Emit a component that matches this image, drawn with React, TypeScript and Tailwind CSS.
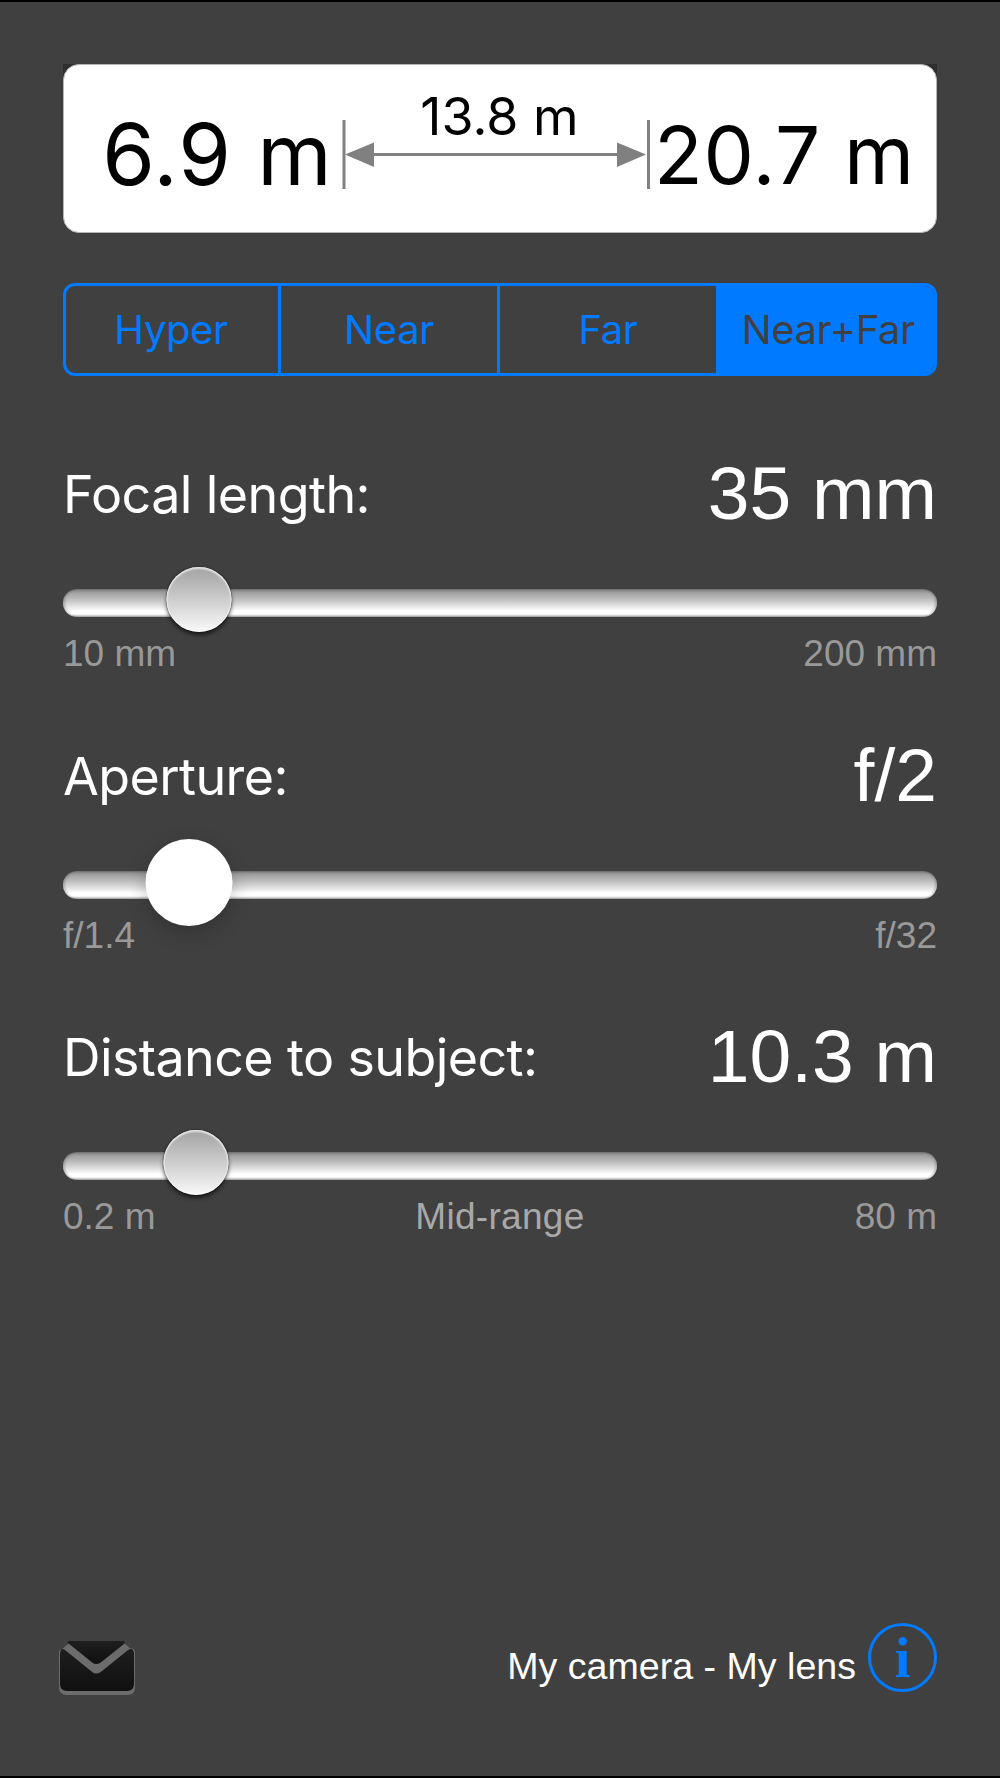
import React from 'react';
import clsx from 'clsx';

const modes = [
    { label: 'Hyper', width: 'w-[212px]' },
    { label: 'Near', width: 'w-[219px]' },
    { label: 'Far', width: 'w-[219px]' },
    { label: 'Near+Far', width: 'w-[218px]' },
];

interface SliderRowProps {
    label: string;
    value: string;
    min: string;
    max: string;
    note?: string;
    position: number;
    active?: boolean;
}

const ResultPanel: React.FC = () => (
    <div className="h-[169px] bg-[linear-gradient(#2f2f2f_16px,transparent_16px)]">
        <div className="flex h-full rounded-[16px] border border-[#b4b4b4] bg-white text-black">
            <div className="w-[278px] pt-[40px] pr-[9px] text-right text-[85px] leading-[100px] tracking-[1.2px] whitespace-nowrap">6.9 m</div>
            <div className="w-[309px]">
                <div className="pt-[20px] pl-[6px] text-center text-[52px] leading-[64px] whitespace-nowrap">13.8 m</div>
                <svg className="-mt-[29px] block" width="309" height="70" viewBox="0 0 309 70" fill="#808080">
                    <rect x="0.5" y="0" width="3" height="69" />
                    <rect x="305" y="0" width="3" height="69" />
                    <rect x="20" y="33" width="270" height="3" />
                    <path d="M3 34.500 32 22.500v24.500z" />
                    <path d="M304 34.500 275 22.500v24.500z" />
                </svg>
            </div>
            <div className="pt-[40px] pl-[3px] text-[80px] leading-[100px] tracking-[0.6px] whitespace-nowrap">20.7 m</div>
        </div>
    </div>
);

const ModePicker: React.FC<{ selected: string }> = ({ selected }) => (
    <div className="mt-[50px] flex h-[93px] overflow-hidden rounded-[12px] border-3 border-[#007aff] bg-[#404040]">
        {modes.map((mode, i) => (
            <button
                key={mode.label}
                className={clsx(
                    'shrink-0 text-center text-[40px] leading-[88px] tracking-[-0.4px] whitespace-nowrap',
                    mode.width,
                    i > 0 ? 'border-l-3 border-[#007aff]' : 'pr-[2px]',
                    mode.label === selected ? 'bg-[#007aff] pl-[3px] text-[#404040]' : 'text-[#007aff]'
                )}
            >
                {mode.label}
            </button>
        ))}
    </div>
);

const SliderRow: React.FC<SliderRowProps> = ({ label, value, min, max, note, position, active }) => (
    <section className="h-[281.5px]">
        <div className="flex h-[139px] items-start justify-between">
            <div className="pt-[15px] text-[52px] leading-[60px] tracking-[-0.6px]">{label}</div>
            <div className="pt-[3px] font-['Liberation_Sans',sans-serif] text-[75px] leading-[80px]">{value}</div>
        </div>
        <div className="relative h-[28px] rounded-[14px] bg-[linear-gradient(#7d7d7d_0px,#a2a2a2_4px,#b8b8b8_9px,#dcdcdc_16px,#fff_22px,#fff_25px,#b0b0b0_28px)] shadow-[inset_2px_0_2px_#00000030,inset_-2px_0_2px_#00000030]">
            <div
                className={clsx(
                    'absolute -translate-x-1/2 rounded-full',
                    active
                        ? '-top-[32px] size-[87px] bg-white shadow-[0_6px_20px_#00000038]'
                        : '-top-[22px] size-[65px] bg-linear-to-b from-[#a2a2a2] to-[#fafafa] shadow-[0_3px_4px_#000000a0,0_0_1px_1px_#00000030,inset_0_2px_2px_#ffffffa0,inset_0_0_1px_1px_#ffffff60]'
                )}
                style={{ left: position }}
            />
        </div>
        <div className="grid grid-cols-3 pt-[17px] font-['Liberation_Sans',sans-serif] text-[37px] leading-[40px] text-[#999]">
            <span>{min}</span>
            <span className="text-center tracking-[0.3px] text-[#a8a8a8]">{note}</span>
            <span className="text-right">{max}</span>
        </div>
    </section>
);

const MailIcon: React.FC = () => (
    <svg className="mt-[18px] -ml-[4px] block" width="80" height="60" viewBox="0 0 80 60">
        <defs>
            <linearGradient id="mail" x1="0" y1="0" x2="0" y2="1">
                <stop offset="0" stopColor="#1e1e1e" />
                <stop offset="1" stopColor="#101010" />
            </linearGradient>
        </defs>
        <path d="M0 10Q2 7 6 9L32 29Q37 34 43 29L70 8Q75 6 76 11V46Q76 54 68 54H8Q0 54 0 46Z" fill="#6c6c6c" />
        <path d="M9 3H66L72 8L43 32Q37 37 32 32L3 8Z" fill="#6c6c6c" />
        <path d="M9 2Q8 0 11 0H64Q67 0 65 3L43 20.500Q37 25.500 32 20.500Z" fill="url(#mail)" />
        <path d="M1 12Q2 6 6 9L32 30Q37 35 43 30L69 9Q74 6 75 12V43Q75 50 68 50H8Q1 50 1 43Z" fill="url(#mail)" />
    </svg>
);

export default function App() {
    return (
        <main className="h-[1778px] w-[1000px] border-y-2 border-black bg-[#404040] px-[63px] pt-[62px] font-['Inter',sans-serif] text-white">
            <ResultPanel />
            <ModePicker selected="Near+Far" />
            <div className="mt-[74px]">
                <SliderRow label="Focal length:" value="35 mm" min="10 mm" max="200 mm" position={135.5} />
                <SliderRow label="Aperture:" value="f/2" min="f/1.4" max="f/32" position={125.5} active />
                <SliderRow label="Distance to subject:" value="10.3 m" min="0.2 m" note="Mid-range" max="80 m" position={132.5} />
            </div>
            <footer className="mt-[328.5px] flex items-start justify-between">
                <MailIcon />
                <div className="flex items-start">
                    <span className="pt-[23px] pr-[12px] font-['Liberation_Sans',sans-serif] text-[37.6px] leading-[40px]">My camera - My lens</span>
                    <div className="flex size-[69px] items-center justify-center rounded-full border-3 border-[#007aff] font-['Liberation_Serif',serif] text-[56px] leading-[60px] font-bold text-[#007aff]">
                        i
                    </div>
                </div>
            </footer>
        </main>
    );
}
